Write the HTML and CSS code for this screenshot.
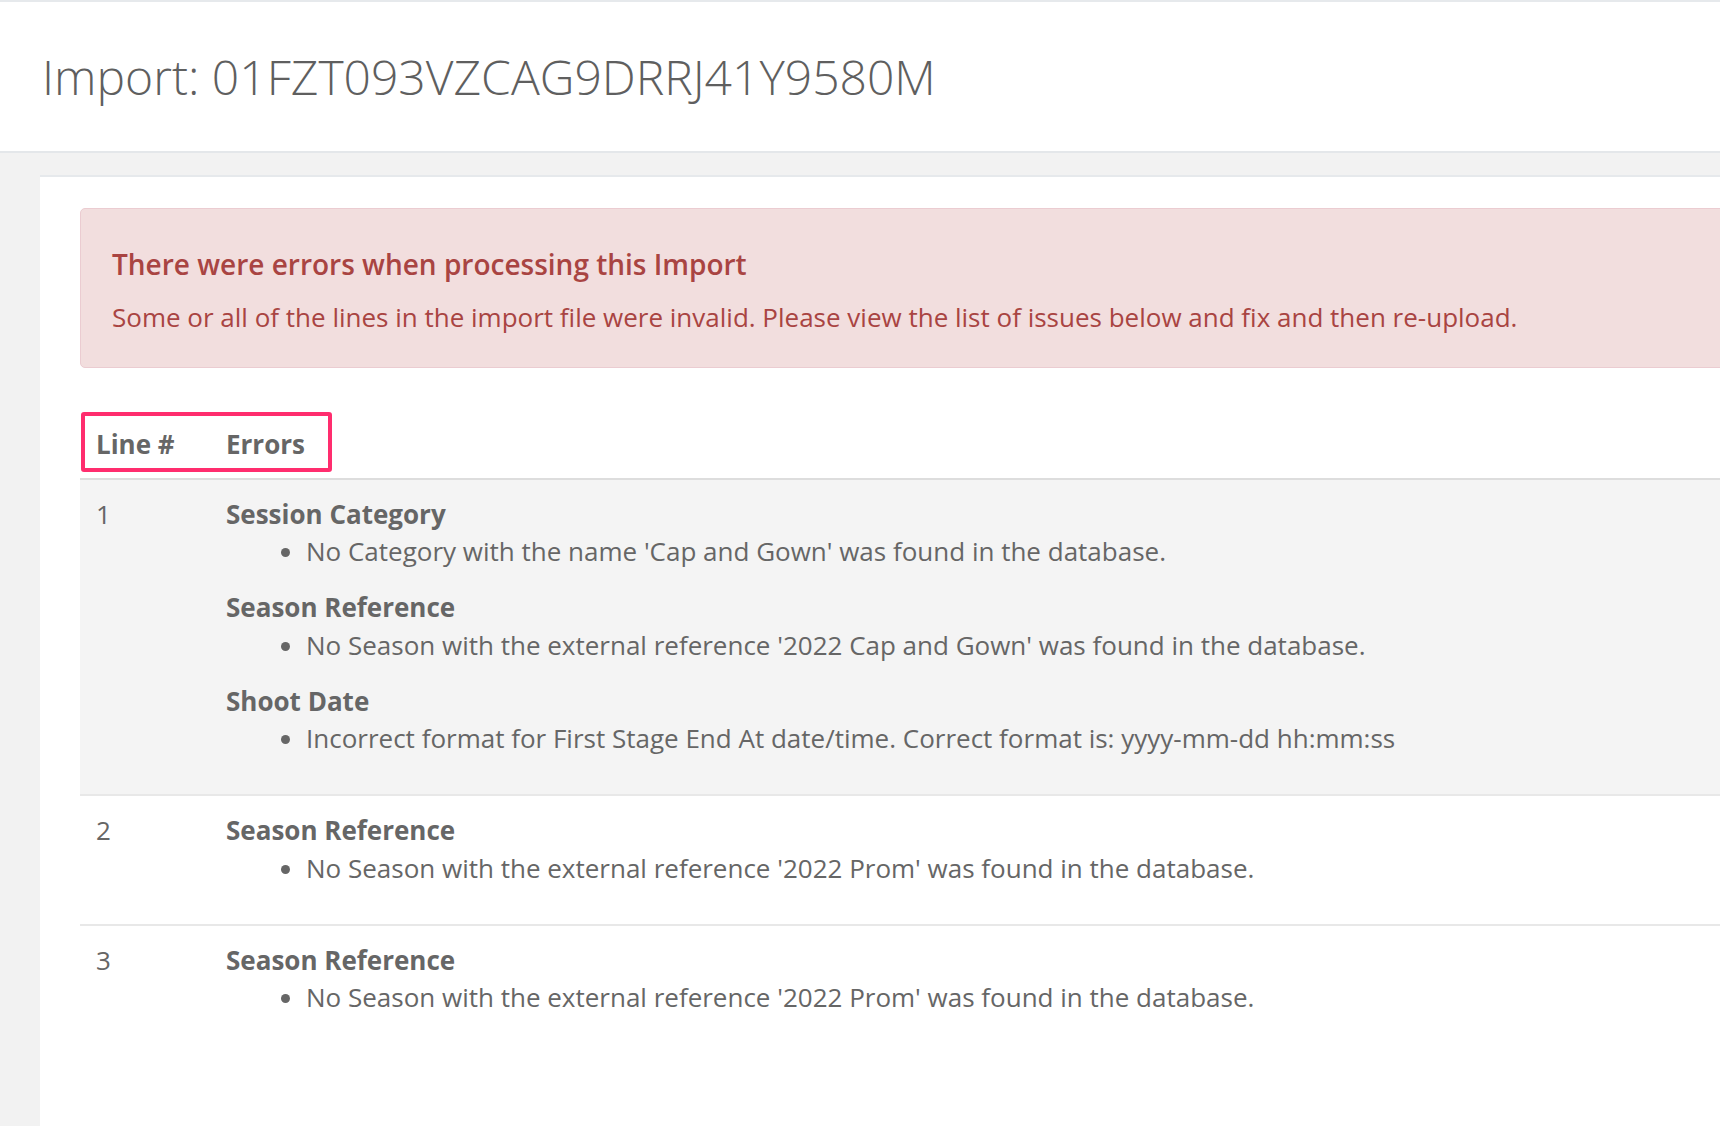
FILE: index.html
```html
<!DOCTYPE html>
<html lang="en">
<head>
  <meta charset="UTF-8" />
  <meta name="viewport" content="width=device-width, initial-scale=1.0" />
  <title>Import: 01FZT093VZCAG9DRRJ41Y9580M</title>
  <link rel="stylesheet" href="styles.css">
</head>
<body>
  <header class="page-header">
    <h1 class="page-title">Import: 01FZT093VZCAG9DRRJ41Y9580M</h1>
  </header>

  <main class="page-body">
    <section class="panel">
      <div class="alert alert-danger">
        <h4 class="alert-title">There were errors when processing this Import</h4>
        <p class="alert-text">Some or all of the lines in the import file were invalid. Please view the list of issues below and fix and then re-upload.</p>
      </div>

      <div class="table-wrap">
        <span class="highlight"></span>
        <table class="errors-table">
          <thead>
            <tr>
              <th class="col-line">Line #</th>
              <th>Errors</th>
            </tr>
          </thead>
          <tbody>
            <tr class="striped">
              <td>1</td>
              <td>
                <div class="error-group">
                  <strong>Session Category</strong>
                  <ul>
                    <li>No Category with the name 'Cap and Gown' was found in the database.</li>
                  </ul>
                </div>
                <div class="error-group">
                  <strong>Season Reference</strong>
                  <ul>
                    <li>No Season with the external reference '2022 Cap and Gown' was found in the database.</li>
                  </ul>
                </div>
                <div class="error-group">
                  <strong>Shoot Date</strong>
                  <ul>
                    <li>Incorrect format for First Stage End At date/time. Correct format is: yyyy-mm-dd hh:mm:ss</li>
                  </ul>
                </div>
              </td>
            </tr>
            <tr>
              <td>2</td>
              <td>
                <div class="error-group">
                  <strong>Season Reference</strong>
                  <ul>
                    <li>No Season with the external reference '2022 Prom' was found in the database.</li>
                  </ul>
                </div>
              </td>
            </tr>
            <tr class="last">
              <td>3</td>
              <td>
                <div class="error-group">
                  <strong>Season Reference</strong>
                  <ul>
                    <li>No Season with the external reference '2022 Prom' was found in the database.</li>
                  </ul>
                </div>
              </td>
            </tr>
          </tbody>
        </table>
      </div>
    </section>
  </main>
</body>
</html>
```

FILE: styles.css
```css
html, body {
  height: 100%;
}

body {
  margin: 0;
  font-family: 'Open Sans', 'Liberation Sans', sans-serif;
  font-size: 26px;
  line-height: 37.5px;
  color: #666666;
  background-color: #f2f2f2;
  border-top: 2px solid #e6e9ec;
  overflow: hidden;
  display: flex;
  flex-direction: column;
  box-sizing: border-box;
}

.page-header {
  background-color: #ffffff;
  height: 151px;
  box-sizing: border-box;
  padding: 46px 0 0 42px;
  border-bottom: 2px solid #e4e7ea;
}

.page-title {
  margin: 0;
  font-size: 48px;
  font-weight: 300;
  line-height: 1.2;
  color: #5f5f5f;
}

.page-body {
  flex: 1;
  padding: 22px 0 0 40px;
}

.panel {
  background-color: #ffffff;
  border-top: 2px solid #e6e9ec;
  height: 100%;
  padding: 31px 0 0 40px;
  box-sizing: border-box;
}

.alert {
  border: 1px solid #ebccd1;
  border-radius: 5px;
  margin-right: -10px;
}

.alert-danger {
  background-color: #f2dede;
  color: #a94442;
  padding: 39px 30px 31px 31px;
}

.alert-title {
  margin: 0 0 17px;
  font-size: 28px;
  font-weight: 600;
  line-height: 1.2;
}

.alert-text {
  margin: 0;
}

.table-wrap {
  position: relative;
  margin-top: 40px;
}

/* annotation box drawn over the header cells */
.highlight {
  position: absolute;
  left: 1px;
  top: 4px;
  width: 243px;
  height: 52px;
  border: 4px solid #ff2d6e;
  border-radius: 3px;
}

.errors-table {
  width: 100%;
  border-collapse: collapse;
}

.errors-table th {
  text-align: left;
  font-weight: 700;
  padding: 18px 16px 14px;
  border-bottom: 2px solid #dddddd;
}

.errors-table .col-line {
  width: 98px;
}

.errors-table td {
  vertical-align: top;
  padding: 16px 16px 17.6px;
  border-bottom: 2px solid #e8e8e8;
}

.errors-table tr.last td {
  border-bottom: none;
}

.errors-table tr.striped td {
  background-color: #f4f4f4;
}

.error-group strong {
  display: block;
  font-weight: 700;
}

.error-group ul {
  margin: 0 0 18.7px;
  padding-left: 80px;
}
```
